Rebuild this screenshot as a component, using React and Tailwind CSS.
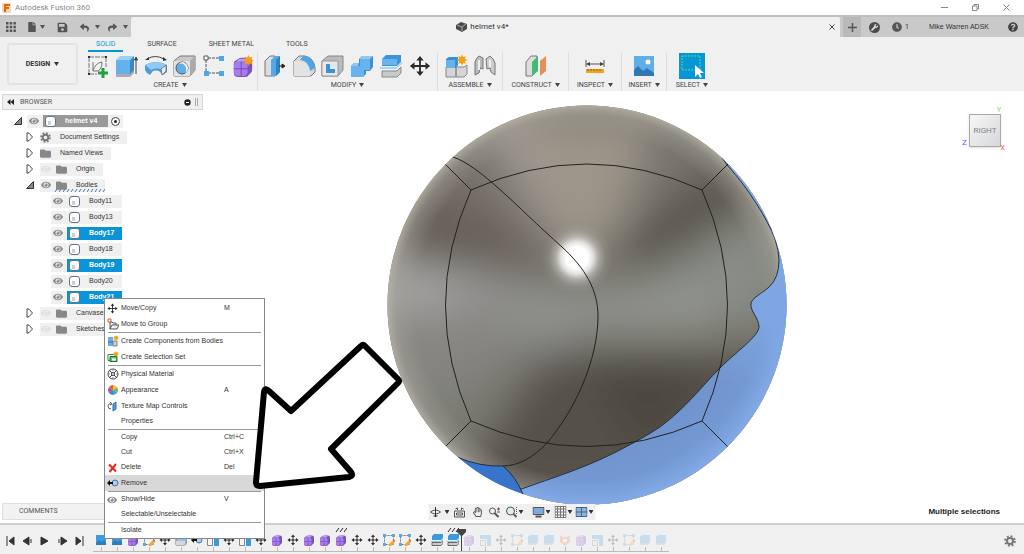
import React, { useState } from "react";
import {
  FaClock,
  FaEye,
  FaFile,
  FaFolder,
  FaQuestionCircle,
  FaRegHandPaper,
  FaReply,
  FaSave,
  FaShare,
  FaWrench,
} from "react-icons/fa";

/* ---------- small shared icons ---------- */

function Caret({ className = "" }) {
  return (
    <svg width="5" height="4" viewBox="0 0 5 4" className={className} aria-hidden>
      <path d="M0 0h5L2.5 4z" fill="currentColor" />
    </svg>
  );
}

function MoveIcon({ size = 12 }) {
  return (
    <svg width={size} height={size} viewBox="0 0 24 24" aria-hidden>
      <path d="M12 4v16M4 12h16" stroke="#2b2b2b" strokeWidth="2" />
      <path
        d="M12 1l4 5H8zM12 23l4-5H8zM1 12l5-4v8zM23 12l-5-4v8z"
        fill="#2b2b2b"
      />
    </svg>
  );
}

function FormIcon({ size = 12, star = false }) {
  return (
    <svg width={size} height={size} viewBox="0 0 24 24" aria-hidden>
      <path
        d="M2 9q0-2 2-3l3-2q1-1 3-1h8q4 0 4 4v9q0 2-1 3l-3 3q-1 2-4 2H7q-5 0-5-5z"
        fill="#7d50c2"
      />
      <path d="M2 10q1-3 4-3h7q4 0 4 4v8q-1 4-4 4H7q-4 0-5-4z" fill="#a77be8" />
      <path d="M4 7l4-3h10l-4 3z" fill="#bd9bf0" />
      <path d="M10 7v16M2 15h15M17 15l5-3" stroke="#7447b8" strokeWidth="1" fill="none" />
      {star && <Star cx={18} cy={6} />}
    </svg>
  );
}

function Star({ cx, cy, s = 1 }) {
  return (
    <path
      transform={`translate(${cx} ${cy}) scale(${s})`}
      d="M0-6l1.3 2.8L4.2-4.2 3.2-1.3 6 0 3.2 1.3 4.2 4.2 1.3 3.2 0 6-1.3 3.2-4.2 4.2-3.2 1.3-6 0-3.2-1.3-4.2-4.2-1.3-3.2z"
      fill="#f5a014"
    />
  );
}

/* ---------- ribbon icons ---------- */

const box = { width: 26, height: 26, viewBox: "0 0 26 26", "aria-hidden": true };

const SketchIcon = () => (
  <svg {...box}>
    <path d="M4 4h17M4 4v17M21 4v10M4 21h8" stroke="#777" strokeDasharray="5 1" fill="none" />
    <path d="M8 18V9M8 18h5Q17 16 17 9Q10 10 8 18" stroke="#777" fill="none" />
    <path d="M3 3h2v2H3zM20 3h2v2h-2zM3 20h2v2H3z" fill="#333" />
    <path d="M18 15v10M13 20h10" stroke="#23a045" strokeWidth="3" />
  </svg>
);
const ExtrudeIcon = () => (
  <svg {...box}>
    <path d="M2 20h14v4H2zM16 24l4-4v-4l-4 4z" fill="#a9adb1" />
    <path d="M2 7h14v14H2z" fill="#65b1ea" />
    <path d="M2 7l4-4h14l-4 4z" fill="#9bd0f5" />
    <path d="M16 7l4-4v14l-4 4z" fill="#3788c8" />
    <path d="M22 6v15M20.500 7L22 4l1.500 3z" stroke="#444" fill="#333" />
  </svg>
);
const RevolveIcon = () => (
  <svg {...box}>
    <path d="M4 6Q12 1 21 6" stroke="#444" fill="none" />
    <path d="M2 7l4-3v3zM20 4l4 3-4 1z" fill="#333" />
    <path d="M2 12q11-6 22 0v7l-4 3-4-4q-3-1-6 0l-3 4q-4-2-5-5z" fill="#4f9bd8" />
    <path d="M2 12q11-6 22 0l-6 4q-5-2-10 1z" fill="#90caf2" />
    <path d="M18 16l5-4v6l-4 4z" fill="#eee" stroke="#777" />
  </svg>
);
const HoleIcon = () => (
  <svg {...box}>
    <path d="M2 8l6-5h15v14l-5 6H2z" fill="#c8c8c8" stroke="#777" />
    <path d="M2 8h16v15H2z" fill="#e2e2e2" />
    <path d="M18 8l5-5v14l-5 6z" fill="#aaa" />
    <circle cx="10" cy="15" r="6" fill="#62aee8" stroke="#555" />
    <path d="M7 11q5-2 7 4 1 3-1 5 3-1 3-5t-5-6q-3 0-4 2z" fill="#f3f3f3" />
  </svg>
);
const PatternIcon = () => (
  <svg {...box}>
    <path d="M7 5h11M5 7v11M7 20h11" stroke="#555" strokeDasharray="3 1" />
    <path d="M3 3h4v4H3z" fill="#fff" stroke="#555" />
    <path d="M18 3h5v5h-5zM3 18h5v5H3zM18 18h5v5h-5z" fill="#4ea7e6" />
  </svg>
);
const PressPullIcon = () => (
  <svg {...box}>
    <path d="M3 8l5-5h5v20H3z" fill="#ddd" stroke="#777" />
    <path d="M9 7l4-4h5v16l-4 4H9z" fill="#57a8e6" />
    <path d="M14 7l4-4v16l-4 4z" fill="#2f83c4" />
    <path d="M17 13h5M20 11l3 2-3 2z" stroke="#222" fill="#222" />
  </svg>
);
const FilletIcon = () => (
  <svg {...box}>
    <path d="M3 23V8l5-5h6q9 2 10 12v4l-4 4z" fill="#d9d9d9" stroke="#777" />
    <path d="M12 3h2q9 2 10 12l-5 3Q18 8 9 7z" fill="#4fa4e4" />
    <path d="M3 8h6q9 2 10 12v3H3z" fill="#e3e3e3" />
  </svg>
);
const ShellIcon = () => (
  <svg {...box}>
    <path d="M2 8l6-5h15v14l-5 6H2z" fill="#bbb" stroke="#888" />
    <path d="M2 8h16v15H2z" fill="#e8e8e8" stroke="#999" />
    <path d="M6 11h9v9H6z" fill="#3b91d3" />
    <path d="M10 11h5v5h-5z" fill="#d9ecf9" />
  </svg>
);
const CombineIcon = () => (
  <svg {...box}>
    <path d="M2 13l3-3h5V6l3-3h11v11l-3 4h-4v3l-3 3H2z" fill="#3b8fd4" />
    <path d="M2 13h9V6h10v11h-6v7H2z" fill="#68b3ec" />
    <path d="M2 13l3-3h5l-1 3zM10 6l3-3h11l-3 3z" fill="#8cc8f3" />
  </svg>
);
const SplitIcon = () => (
  <svg {...box}>
    <path d="M4 6l4-4h15v7l-4 4H4z" fill="#3f94d6" />
    <path d="M4 6h15v6H4z" fill="#69b4ec" />
    <path d="M2 14h16l6-5v2l-6 5H2z" fill="#a4d6f8" />
    <path d="M4 18h15l4-4v6l-4 4H4z" fill="#c9c9c9" stroke="#888" />
  </svg>
);
const NewComponentIcon = () => (
  <svg {...box}>
    <path d="M3 14h10v10H3zM13 14h8l3-2v9l-3 3h-8z" fill="#d5d5d5" stroke="#888" />
    <path d="M3 6l3-2h9v8l-2 3H3z" fill="#3990d6" />
    <path d="M3 7h9v8H3z" fill="#67b2eb" />
    <Star cx={19} cy={7} s={0.9} />
  </svg>
);
const JointIcon = () => (
  <svg {...box}>
    <path d="M3 9q1-4 4-6l4 2v11l-3-1-1 5-4 2z" fill="#bbb" stroke="#777" />
    <path d="M14 6l4-3q4 3 5 7v12l-4-3-1-4-3 1z" fill="#ccc" stroke="#777" />
    <path d="M7 7v10M18 7v7" stroke="#eee" strokeWidth="2" />
  </svg>
);
const ConstructIcon = () => (
  <svg {...box}>
    <path d="M3 9l5-6h6v15l-5 5H3z" fill="#ddd" stroke="#777" />
    <path d="M9 9l6-6v15l-6 5z" fill="#41bc74" />
    <path d="M17 8l6-5v15l-6 5z" fill="#e88d58" />
  </svg>
);
const MeasureIcon = () => (
  <svg {...box}>
    <path d="M4 7v7M22 7v7M5 11h16" stroke="#555" />
    <path d="M4 11l4-2v4zM22 11l-4-2v4z" fill="#444" />
    <path d="M4 16h18v4H4z" fill="#eda51d" />
    <path d="M6 16v2M9 16v2M12 16v2M15 16v2M18 16v2" stroke="#8b600d" />
  </svg>
);
const InsertIcon = () => (
  <svg {...box}>
    <path d="M3 3h20v20H3z" fill="#5eaee9" />
    <path d="M3 17l4-4 5 5 4-3 7 5v3H3z" fill="#2f78b4" />
    <circle cx="17" cy="9" r="2.500" fill="#fff6c9" />
  </svg>
);
const SelectIcon = () => (
  <svg {...box}>
    <path d="M0 0h26v26H0z" fill="#0696d7" />
    <path d="M3 3h18v14H3z" fill="none" stroke="#5bdc79" strokeDasharray="2 1" />
    <path d="M16 12v12l3-3 2 4 2-1-2-4h4z" fill="#fff" />
  </svg>
);

const toolGroups = [
  {
    name: "CREATE",
    width: "w-[175px]",
    tools: [
      ["Create Sketch", <SketchIcon />],
      ["Extrude", <ExtrudeIcon />],
      ["Revolve", <RevolveIcon />],
      ["Hole", <HoleIcon />],
      ["Pattern", <PatternIcon />],
      ["Create Form", <FormIcon size={22} star />],
    ],
  },
  {
    name: "MODIFY",
    width: "w-[180px]",
    tools: [
      ["Press Pull", <PressPullIcon />],
      ["Fillet", <FilletIcon />],
      ["Shell", <ShellIcon />],
      ["Combine", <CombineIcon />],
      ["Split Body", <SplitIcon />],
      ["Move", <MoveIcon size={22} />],
    ],
  },
  {
    name: "ASSEMBLE",
    width: "w-[65px]",
    tools: [
      ["New Component", <NewComponentIcon />],
      ["Joint", <JointIcon />],
    ],
  },
  { name: "CONSTRUCT", width: "w-[66px]", tools: [["Offset Plane", <ConstructIcon />]] },
  { name: "INSPECT", width: "w-[53px]", tools: [["Measure", <MeasureIcon />]] },
  { name: "INSERT", width: "w-[45px]", tools: [["Insert Image", <InsertIcon />]] },
  { name: "SELECT", width: "w-[50px]", tools: [["Select", <SelectIcon />]] },
];

function TitleBar() {
  return (
    <header className="flex h-[15px] items-center justify-between bg-white">
      <div className="flex items-center gap-1 pl-[2px]">
        <svg width="9" height="10" viewBox="0 0 9 10" aria-hidden>
          <path d="M0 0h9v10H0z" fill="#f9d5b5" />
          <path d="M2 1h6v2H4v1h3v2H4v3H2z" fill="#d86c0d" />
        </svg>
        <span className="text-[8px] leading-[15px] text-[#888]">Autodesk Fusion 360</span>
      </div>
      <div className="flex items-center gap-6 pr-[14px] text-[#888]">
        <button aria-label="Minimize">
          <svg width="7" height="7" viewBox="0 0 7 7"><path d="M0 3.500h7" stroke="currentColor" /></svg>
        </button>
        <button aria-label="Restore">
          <svg width="7" height="7" viewBox="0 0 7 7" fill="none" stroke="currentColor">
            <path d="M.5 2h4.500v4.500H.5zM2 2V.5h4.500V5H5" />
          </svg>
        </button>
        <button aria-label="Close window">
          <svg width="7" height="7" viewBox="0 0 7 7"><path d="M.5.5l6 6M6.500.5l-6 6" stroke="currentColor" /></svg>
        </button>
      </div>
    </header>
  );
}

function DocumentBar() {
  return (
    <div className="flex h-[22px] border-t-2 border-[#bfbfbf] bg-[#c9c9c9] text-[#555]">
      <div className="flex w-[131px] items-center pl-[6px]">
        <button aria-label="Data panel">
          <svg width="10" height="10" viewBox="0 0 10 10" fill="#555">
            <path d="M0 0h2.500v2.500H0zM3.700 0h2.500v2.500H3.700zM7.400 0h2.500v2.500H7.400zM0 3.700h2.500v2.500H0zM3.700 3.700h2.500v2.500H3.700zM7.400 3.700h2.500v2.500H7.400zM0 7.400h2.500v2.500H0zM3.700 7.400h2.500v2.500H3.700zM7.400 7.400h2.500v2.500H7.400z" />
          </svg>
        </button>
        <button aria-label="File" className="ml-[11px] flex items-center gap-[3px]"><FaFile size={10} /><Caret /></button>
        <button aria-label="Save" className="ml-3"><FaSave size={11} /></button>
        <button aria-label="Undo" className="ml-3 flex items-center gap-[6px]"><FaReply size={9} /><Caret /></button>
        <button aria-label="Redo" className="ml-2 flex items-center gap-[6px]"><FaShare size={9} /><Caret /></button>
      </div>
      <div className="flex flex-1 items-center rounded-t-[2px] bg-[#f0f0f0] px-[5px]">
        <div className="flex flex-1 items-center justify-center gap-[3px] text-[8px] text-[#333]">
          <svg width="11" height="10" viewBox="0 0 11 10" aria-hidden>
            <path d="M0 3l5-3 6 2v5L6 10 0 7z" fill="#4c4c4c" />
            <path d="M1 3l5 2 4-3M6 5v4" stroke="#aaa" fill="none" />
          </svg>
          helmet v4*
        </div>
        <button aria-label="Close tab">
          <svg width="6" height="6" viewBox="0 0 6 6"><path d="M.5.5l5 5M5.500.5l-5 5" stroke="#444" /></svg>
        </button>
      </div>
      <div className="flex w-[184px] items-center pl-[3px]">
        <button aria-label="New tab" className="flex h-full w-[18px] items-center justify-center bg-[#b9b9b9]">
          <svg width="9" height="9" viewBox="0 0 9 9"><path d="M4.500 0v9M0 4.500h9" stroke="#555" strokeWidth="1.500" /></svg>
        </button>
        <button aria-label="Extensions" className="ml-2 flex h-[11px] w-[11px] items-center justify-center rounded-full bg-[#4c4c4c] text-[#ddd]">
          <FaWrench size={7} />
        </button>
        <button className="ml-3 flex items-center gap-[3px] text-[7px] text-[#333]"><FaClock size={10} color="#555" />1</button>
        <button className="ml-5 whitespace-nowrap font-['Liberation_Sans',sans-serif] text-[7px] text-[#333]">Mike Warren ADSK</button>
        <button aria-label="Help" className="ml-auto mr-[6px]"><FaQuestionCircle size={10} color="#444" /></button>
      </div>
    </div>
  );
}

function Ribbon() {
  const [tab, setTab] = useState("SOLID");
  return (
    <div className="flex h-[54px] bg-[#f0f0f0] text-[7px] text-[#444]">
      <button className="mt-[6px] ml-[7px] flex h-[42px] w-[71px] items-center justify-center gap-1 rounded-[3px] border-2 border-[#e3e3e3] font-bold text-[#333]">
        DESIGN <Caret />
      </button>
      <div className="ml-[5px]">
        <nav className="flex h-[15px] gap-4 pl-[5px]">
          {["SOLID", "SURFACE", "SHEET METAL", "TOOLS"].map((t) => (
            <button
              key={t}
              onClick={() => setTab(t)}
              className={`h-[15px] border-b-2 px-2 pt-[2px] leading-[11px] ${
                t === tab ? "border-[#0696d7] text-[#0696d7]" : "border-transparent"
              }`}
            >
              {t}
            </button>
          ))}
        </nav>
        <div className="flex">
          {toolGroups.map((g) => (
            <div key={g.name} className={`${g.width} flex flex-col items-center border-r border-[#dedede] last:border-r-0`}>
              <div className="flex h-[27px] items-center">
                {g.tools.map(([name, icon]) => (
                  <button key={name} aria-label={name} className="flex w-[29px] justify-center">{icon}</button>
                ))}
              </div>
              <button className="flex h-3 items-center gap-[3px] leading-[12px]">{g.name} <Caret /></button>
            </div>
          ))}
        </div>
      </div>
    </div>
  );
}

/* ---------- browser tree ---------- */

function Eye({ off }) {
  return <FaEye size={10} className={off ? "text-[#dedede]" : "text-[#8a8a8a]"} />;
}

function Twisty({ open }) {
  return (
    <svg width="8" height="10" viewBox="0 0 8 10" aria-hidden>
      {open ? (
        <path d="M7.500 1.500v7h-7z" fill="#888" stroke="#333" />
      ) : (
        <path d="M1 .8v8.400l2-.6 3.500-3.600L3 1.200z" fill="#fff" stroke="#444" />
      )}
    </svg>
  );
}

function BodyIcon() {
  return (
    <svg width="11" height="11" viewBox="0 0 11 11" aria-hidden>
      <rect x=".5" y=".5" width="10" height="10" rx="2.500" fill="#fff" stroke="#68727c" />
      <path d="M3 5h3v4H3z" fill="#c9d2dc" />
    </svg>
  );
}

function Gear({ size = 11 }) {
  return (
    <svg width={size} height={size} viewBox="0 0 12 12" aria-hidden>
      <circle cx="6" cy="6" r="4.800" fill="none" stroke="#777" strokeWidth="2" strokeDasharray="1.900 1.870" />
      <circle cx="6" cy="6" r="3" fill="none" stroke="#777" strokeWidth="2" />
    </svg>
  );
}

const folders = [
  { name: "Document Settings", icon: "gear" },
  { name: "Named Views" },
  { name: "Origin", eye: true, off: true },
  { name: "Bodies", eye: true, open: true },
];
const bodies = ["Body11", "Body13", "Body17", "Body18", "Body19", "Body20", "Body21"];
const lastFolders = [
  { name: "Canvases", eye: true, off: true },
  { name: "Sketches", eye: true, off: true },
];

function FolderRow({ item }) {
  return (
    <li className="flex h-4 items-center pl-[24px]">
      <button aria-label={`Expand ${item.name}`}><Twisty open={item.open} /></button>
      <div className="relative ml-[6px] flex h-[13px] items-center bg-[#f0f0f0] pr-2">
        {item.eye && <span className="flex w-4 justify-start pl-[1px]"><Eye off={item.off} /></span>}
        <span className="w-5">{item.icon ? <Gear /> : <FaFolder size={11} color="#888" />}</span>
        {item.name}
        {item.open && (
          <svg width="52" height="3" viewBox="0 0 52 3" className="absolute bottom-0 left-[14px]" aria-hidden>
            <path d="M1 3l2-3M5 3l2-3M9 3l2-3M13 3l2-3M17 3l2-3M21 3l2-3M25 3l2-3M29 3l2-3M33 3l2-3M37 3l2-3M41 3l2-3M45 3l2-3M49 3l2-3" stroke="#4f7ba3" />
          </svg>
        )}
      </div>
    </li>
  );
}

function Browser() {
  const [selected, setSelected] = useState(["Body17", "Body19", "Body21"]);

  const toggle = (name) =>
    setSelected((s) => (s.includes(name) ? s.filter((n) => n !== name) : [...s, name]));

  return (
    <aside className="flex w-[203px] flex-col pt-[3px] pl-[2px] font-['Liberation_Sans',sans-serif] text-[7px] text-[#333]">
      <div className="flex h-4 items-center border border-[#d5d5d5] bg-[#f0f0f0] px-1 font-[Roboto,sans-serif] text-[#555]">
        <svg width="7" height="6" viewBox="0 0 7 6" aria-hidden><path d="M3.500 0v6L0 3zM7 0v6L3.500 3z" fill="#222" /></svg>
        <span className="ml-[6px]">BROWSER</span>
        <button aria-label="Display settings" className="ml-auto mr-1">
          <svg width="7" height="7" viewBox="0 0 7 7"><circle cx="3.500" cy="3.500" r="3.200" fill="#222" /><path d="M2 3.500h3" stroke="#fff" /></svg>
        </button>
        <span className="h-2 w-[3px] border-x border-[#aaa]" />
      </div>
      <ul className="pt-[3px]">
        <li className="flex h-4 items-center pl-3">
          <button aria-label="Collapse helmet v4"><Twisty open /></button>
          <div className="ml-[5px] flex h-[13px] items-center bg-[#f0f0f0] pl-[2px]">
            <Eye />
            <button className="ml-1 flex h-[12px] w-[65px] items-center gap-[9px] bg-[#999] pl-[2px] font-bold text-white">
              <BodyIcon />helmet v4
            </button>
            <svg width="15" height="9" viewBox="0 0 15 9" aria-hidden>
              <circle cx="7.500" cy="4.500" r="4" fill="#fff" stroke="#444" /><circle cx="7.500" cy="4.500" r="1.500" fill="#222" />
            </svg>
          </div>
        </li>
        {folders.map((f) => <FolderRow key={f.name} item={f} />)}
        {bodies.map((b) => (
          <li key={b} className="flex h-4 items-center pl-[49px]">
            <span className="flex h-[13px] w-4 items-center bg-[#f0f0f0] pl-[2px]"><Eye /></span>
            <button
              onClick={() => toggle(b)}
              className={`flex h-[13px] w-[55px] items-center gap-[9px] pl-[2px] ${
                selected.includes(b) ? "bg-[#0a94d8] font-bold text-white" : "bg-[#f0f0f0]"
              }`}
            >
              <BodyIcon />{b}
            </button>
          </li>
        ))}
        {lastFolders.map((f) => <FolderRow key={f.name} item={f} />)}
      </ul>
      <button className="mt-auto mb-[3px] h-[17px] border border-[#e0e0e0] bg-[#f2f2f2] pl-4 text-left font-[Roboto,sans-serif] text-[#555]">
        COMMENTS
      </button>
    </aside>
  );
}

/* ---------- model ---------- */

function Helmet() {
  return (
    <svg width="400" height="400" viewBox="387 105 400 400" role="img" aria-label="helmet model">
      <defs>
        <clipPath id="ball"><circle cx="587" cy="305" r="199.500" /></clipPath>
        <filter id="soft" x="-60%" y="-60%" width="220%" height="220%"><feGaussianBlur stdDeviation="20" /></filter>
        <radialGradient id="rim" gradientUnits="userSpaceOnUse" cx="587" cy="305" r="200">
          <stop offset=".86" stopColor="#a6a49a" stopOpacity="0" />
          <stop offset=".95" stopColor="#a6a49a" stopOpacity=".4" />
          <stop offset="1" stopColor="#b9b6aa" stopOpacity=".8" />
        </radialGradient>
        <radialGradient id="shine" gradientUnits="userSpaceOnUse" cx="577" cy="258" r="36">
          <stop offset="0" stopColor="#fff" />
          <stop offset=".3" stopColor="#fff" />
          <stop offset=".45" stopColor="#fbfafa" stopOpacity=".8" />
          <stop offset=".6" stopColor="#eae8e6" stopOpacity=".42" />
          <stop offset=".8" stopColor="#d0cecb" stopOpacity=".12" />
          <stop offset="1" stopColor="#c8c6c4" stopOpacity="0" />
        </radialGradient>
        <radialGradient id="blue" gradientUnits="userSpaceOnUse" cx="587" cy="305" r="200">
          <stop offset=".6" stopColor="#6e92ca" />
          <stop offset=".88" stopColor="#7398d2" />
          <stop offset="1" stopColor="#83aae7" />
        </radialGradient>
        <linearGradient id="blueTop" x1="0" y1="0" x2="0" y2="1">
          <stop offset=".3" stopColor="#7fa6e2" />
          <stop offset=".65" stopColor="#7fa6e2" stopOpacity="0" />
        </linearGradient>
      </defs>
      <g clipPath="url(#ball)">
        <path d="M387 105h400v400H387z" fill="#76736c" />
        <g filter="url(#soft)">
          <path d="M350 70h480v50q-240-50-460 50z" fill="#827c70" />
          <path d="M490 120h165l-35 110-45 30-40-45z" fill="#9c9689" />
          <path d="M555 235L480 130l45-20z" fill="#a19b94" />
          <path d="M555 270L440 180l-60 60v30z" fill="#655f56" />
          <path d="M570 250L450 165l-20 30z" fill="#777067" />
          <path d="M590 300L350 245v95z" fill="#a3a2a0" />
          <path d="M560 290H450v60h120z" fill="#8f8e8c" />
          <path d="M560 320L350 310v130l90 10z" fill="#868581" />
          <path d="M530 350L380 420l50 60z" fill="#7b7c75" />
          <path d="M605 250L725 165l30 40-100 60z" fill="#59534d" />
          <path d="M610 300l170-100v125z" fill="#888d85" />
          <path d="M520 290h200v40H520z" fill="#92958f" />
          <path d="M545 355h240l-90 150H450z" fill="#54514a" />
          <path d="M590 365h125l-70 95z" fill="#4b463f" />
        </g>
        <circle cx="587" cy="305" r="200" fill="url(#rim)" />
        <circle cx="577" cy="258" r="36" fill="url(#shine)" />
        <path
          d="M722 158L728 166C748 188 768 220 775 239Q779 251 779 260Q779 278 769 287C763 293 751 298 751 304C750 311 759 318 759 327C758 337 737 351 720 368C700 388 687 407 660 427Q645 437 633 443C590 467 560 475 520 489L500 500V505H787V158z"
          fill="url(#blue)"
        />
        <path d="M779 258Q779 278 769 287C763 293 751 298 751 304C750 311 759 318 759 327C758 337 737 351 720 368V450H787V258z" fill="url(#blueTop)" />
        <path d="M722 158L728 166C748 188 768 220 775 239Q779 251 779 260Q779 278 769 287C763 293 751 298 751 304C750 311 759 318 759 327C758 337 737 351 720 368C700 388 687 407 660 427Q645 437 633 443C590 467 560 475 513 492" fill="none" stroke="#27303c" />
        <path d="M457 457Q480 467 503 466Q516 477 523 494V505H440z" fill="#3775cc" stroke="#222f42" />
        <g fill="none" stroke="#24221f" strokeWidth="1">
          <path d="M471 190Q587 138 702 190Q753 305 702 421Q587 472 471 421Q420 305 471 190" />
          <path d="M471 190l-26-26M702 190l26-26M471 421l-26 26M702 421l26 26" />
          <path d="M453 157C480 166 515 205 562 247C585 268 598 290 598 316C598 360 575 410 547 443C533 458 517 466 503 466" />
        </g>
      </g>
    </svg>
  );
}

function ViewCube() {
  return (
    <div className="absolute top-[23px] right-[23px] h-[33px] w-[32px]">
      <button className="h-full w-full border border-[#aaa] bg-linear-to-br from-[#f7f7f7] to-[#d5d7da] text-[8px] text-[#7d858d] shadow">
        RIGHT
      </button>
      <span className="absolute -top-[8px] right-0 text-[7px] leading-[8px] text-[#5ee65e]">Y</span>
      <span className="absolute bottom-0 -left-[7px] text-[8px] leading-[8px] text-[#5a5aff]">Z</span>
      <span className="absolute -right-[4px] -bottom-[5px] text-[7px] leading-[8px] text-[#ff4d4d]">X</span>
    </div>
  );
}

function NavBar() {
  const line = { width: 12, height: 12, viewBox: "0 0 12 12", fill: "none", stroke: "#555" };
  return (
    <div className="absolute bottom-[3px] left-1/2 flex h-4 w-[167px] -translate-x-1/2 items-center bg-[#f0f0f0] pl-[1px] text-[#333]">
      <button aria-label="Orbit" className="flex items-center gap-[3px]">
        <svg {...line}><path d="M1 6q5-4 10 0-5 4-10 0" /><path d="M6 1v10M4 10h4" stroke="#333" /></svg><Caret />
      </button>
      <button aria-label="Look at" className="ml-1">
        <svg {...line}><path d="M1 5h10v6H1zM3 7h6v2H3zM2 3l2-1v2M10 3L8 2v2" /></svg>
      </button>
      <button aria-label="Pan" className="ml-[7px]"><FaRegHandPaper size={10} color="#555" /></button>
      <button aria-label="Zoom" className="ml-[6px]">
        <svg {...line}><circle cx="4" cy="5" r="3" /><path d="M6 7l4 4" strokeWidth="2" /><path d="M8.500 3h3M10 1.500v3M8.500 6h3" /></svg>
      </button>
      <button aria-label="Fit" className="ml-[5px] flex items-center gap-[1px]">
        <svg {...line}><circle cx="5" cy="5" r="4" fill="#dceee6" /><path d="M8 8l3 3" strokeWidth="2" /><path d="M11 1v7" strokeDasharray="1 1" /></svg><Caret />
      </button>
      <button aria-label="Display" className="ml-[9px] flex items-center gap-[1px]">
        <svg {...line}><path d="M.5 1.500h11v7H.5z" fill="#80a9da" /><path d="M3 10.500h6" strokeWidth="2" /></svg><Caret />
      </button>
      <button aria-label="Grid" className="ml-1 flex items-center gap-[1px]">
        <svg {...line}><path d="M.5.5h11v11H.5zM3 .5v11M6 .5v11M9 .5v11M.5 3h11M.5 6h11M.5 9h11" stroke="#777" /></svg><Caret />
      </button>
      <button aria-label="Viewports" className="ml-[3px] flex items-center gap-[1px]">
        <svg {...line}><path d="M.5 1.500h11v9H.5zM6 1v10M0 6h12" fill="#8eb4e2" stroke="#44628a" /></svg><Caret />
      </button>
    </div>
  );
}

/* ---------- context menu ---------- */

const s12 = { width: 12, height: 12, viewBox: "0 0 12 12", fill: "none", "aria-hidden": true };

const GroupIcon = () => (
  <svg {...s12}>
    <path d="M3 11V4h2l1 1h3v2M3 11h7l2-4H5z" fill="#eee" stroke="#555" />
    <path d="M1 1h3v3H1z" fill="#fff" stroke="#d26038" />
  </svg>
);
const ComponentsIcon = () => (
  <svg {...s12}>
    <path d="M1 2h5v9H1z" fill="#68ace1" /><path d="M6 6h4v5H6z" fill="#ccc" stroke="#888" />
    <path d="M1 7h5" stroke="#3478b0" /><Star cx={9} cy={3} s={0.5} />
  </svg>
);
const SelectionSetIcon = () => (
  <svg {...s12}>
    <path d="M1 3.500h8v6H1z" fill="#fff" stroke="#2c8c38" /><path d="M3 5.500h7v5H3z" fill="#69bd72" stroke="#226e2c" />
    <path d="M5 7.500h4v2H5z" fill="#fff" /><Star cx={9} cy={3} s={0.5} />
  </svg>
);
const MaterialIcon = () => (
  <svg {...s12}>
    <circle cx="6" cy="6" r="5" stroke="#444" /><circle cx="6" cy="6" r="1.500" stroke="#444" />
    <path d="M2 2l3 3M10 2L7 5M2 10l3-3M10 10L7 7" stroke="#444" />
    <path d="M1 6h2M9 6h2M6 1v2M6 9v2" stroke="#888" />
  </svg>
);
const AppearanceIcon = () => (
  <svg {...s12}>
    <path d="M6 6V1a5 5 0 0 1 4.300 2.500z" fill="#f6c125" /><path d="M6 6l4.300-2.500a5 5 0 0 1 0 5z" fill="#62bd49" />
    <path d="M6 6l4.300 2.500A5 5 0 0 1 6 11z" fill="#31b0b5" /><path d="M6 6v5a5 5 0 0 1-4.300-2.500z" fill="#4978dd" />
    <path d="M6 6L1.700 8.500a5 5 0 0 1 0-5z" fill="#a24ac3" /><path d="M6 6L1.700 3.500A5 5 0 0 1 6 1z" fill="#ef5a36" />
  </svg>
);
const TextureIcon = () => (
  <svg {...s12}><path d="M5 4Q1 3 1 6t3 3M3 2l2 2-2 1" stroke="#666" /><path d="M6 4l3-2v7l-3 2z" fill="#4d9fe0" stroke="#2e6fa5" /></svg>
);
const DeleteIcon = () => (
  <svg {...s12}><path d="M2 2.500l7 7M9 2L2.500 10" stroke="#e5261f" strokeWidth="2" /></svg>
);
const RemoveIcon = () => (
  <svg {...s12}><circle cx="8" cy="6" r="3" fill="#a9ccef" stroke="#4674ab" /><path d="M6 6H2" stroke="#111" strokeWidth="2" /><path d="M3 3L0 6l3 3z" fill="#111" /></svg>
);

const menu = [
  [
    { label: "Move/Copy", keys: "M", icon: <MoveIcon size={11} />, tall: true },
    { label: "Move to Group", icon: <GroupIcon />, tall: true },
  ],
  [
    { label: "Create Components from Bodies", icon: <ComponentsIcon />, tall: true },
    { label: "Create Selection Set", icon: <SelectionSetIcon />, tall: true },
  ],
  [
    { label: "Physical Material", icon: <MaterialIcon />, tall: true },
    { label: "Appearance", keys: "A", icon: <AppearanceIcon />, tall: true },
    { label: "Texture Map Controls", icon: <TextureIcon />, tall: true },
    { label: "Properties" },
  ],
  [
    { label: "Copy", keys: "Ctrl+C" },
    { label: "Cut", keys: "Ctrl+X" },
    { label: "Delete", keys: "Del", icon: <DeleteIcon /> },
    { label: "Remove", icon: <RemoveIcon />, tall: true, active: true },
  ],
  [
    { label: "Show/Hide", keys: "V", icon: <FaEye size={10} color="#888" /> },
    { label: "Selectable/Unselectable" },
  ],
  [{ label: "Isolate" }],
];

function ContextMenu() {
  return (
    <div className="absolute top-[298px] left-[104px] z-10 w-[161px] border border-[#888] bg-white font-['Liberation_Sans',sans-serif] text-[7px] text-[#333]">
      {menu.map((section, i) => (
        <div key={i} className={i > 0 ? "bg-[linear-gradient(#999,#999)] bg-[length:153px_1px] bg-[position:3px_0] bg-no-repeat pt-px" : "pt-px"}>
          {section.map((item) => (
            <button
              key={item.label}
              className={`flex w-full items-center pl-[2px] text-left ${item.tall ? "h-4" : "h-[15px]"} ${
                item.active ? "bg-[#d8d8d8]" : "hover:bg-[#d8d8d8]"
              }`}
            >
              <span className="flex w-[14px] justify-start">{item.icon}</span>
              <span className="flex-1 whitespace-nowrap">{item.label}</span>
              {item.keys && <span className="w-[40px]">{item.keys}</span>}
            </button>
          ))}
        </div>
      ))}
    </div>
  );
}

/* ---------- timeline ---------- */

const features = {
  canvas: <svg {...s12}><path d="M1 1h10v10H1z" fill="#3e9cde" /><path d="M1 9l3-3 3 2 2-2 2 3v2H1z" fill="#2b7fbd" /></svg>,
  form: <FormIcon size={12} />,
  move: <MoveIcon size={12} />,
  sketch: (
    <svg {...s12}>
      <path d="M1.500 1.500h9v9h-9z" stroke="#777" strokeDasharray="2 1" />
      <path d="M0 0h3v3H0zM9 0h3v3H9zM0 9h3v3H0z" fill="#5aa8e2" />
      <path d="M6 10l4-4 2 2-4 4H6z" fill="#f4a72b" /><path d="M10 6l2 2 .5-2z" fill="#d64c35" />
    </svg>
  ),
  slab: <svg {...s12}><path d="M1 3l2-2h9v7l-2 3H1z" fill="#8ec3eb" stroke="#777" /><path d="M1 7h9v4H1z" fill="#d7d7d7" /></svg>,
  remove: <RemoveIcon />,
  mirror: <svg {...s12}><path d="M.5 3.500h5v8h-5z" fill="#f5f5f5" stroke="#888" /><path d="M7 2h5v10H7z" fill="#3d9bdc" /></svg>,
  split: (
    <svg {...s12}>
      <path d="M1 2l2-2h9v4l-2 2H1z" fill="#3c98da" /><path d="M0 7.500h9l3-3" stroke="#8ac8f4" />
      <path d="M1 8.500h9l2-2v3l-2 2H1z" fill="#ccc" stroke="#666" />
    </svg>
  ),
  scale: <svg {...s12}><path d="M1 1h11v11H8V5H1z" fill="#4aa3df" /><path d="M1.500 6.500h5v5h-5z" fill="#eee" stroke="#888" /></svg>,
  extrude: <svg {...s12}><path d="M1 3l2-2h8v7l-2 3H1z" fill="#55a8e3" /><path d="M1 9h8v2H1z" fill="#aaa" /></svg>,
  surface: <svg {...s12}><path d="M1 1l3 2h4l3-2v7l-5 4-5-4z" fill="#ee8a4f" /><path d="M4 5h4v3H4z" fill="#fff" /></svg>,
};

const done = [
  "canvas", "canvas", "form", "sketch", "move", "slab", "remove", "mirror", "move", "mirror", "move", "form",
  "move", "form", "form", "form", "move", "move", "sketch", "sketch", "move", "split", "split",
];
const rolledBack = [
  "form", "scale", "move", "sketch", "extrude", "extrude", "surface", "form", "scale", "move", "sketch", "extrude", "extrude",
];

function Timeline() {
  const controls = [
    ["First", "M2 1v10M4 6l5-4v8z"],
    ["Previous", "M1 6l6-4v8zM9 4v4"],
    ["Play", "M2 2l7 4-7 4z"],
    ["Next", "M11 6L5 2v8zM3 4v4"],
    ["Last", "M10 1v10M8 6L3 2v8z"],
  ];
  return (
    <footer className="flex h-[31px] items-start border-t-2 border-[#cfcfcf] bg-[#f0f0f0]">
      <div className="flex gap-[5px] pt-[10px] pl-[5px]">
        {controls.map(([name, d]) => (
          <button key={name} aria-label={name}>
            <svg width="12" height="12" viewBox="0 0 12 12"><path d={d} fill="#333" stroke="#333" /></svg>
          </button>
        ))}
      </div>
      <ol className="ml-2 flex">
        {[...done, ...rolledBack].map((f, i) => (
          <li key={i} className="relative flex h-[27px] w-4 flex-col items-center justify-end border-b border-[#bbb]">
            {(i === 15 || i === 22) && (
              <svg width="12" height="4" viewBox="0 0 12 4" className="absolute top-[3px]" aria-hidden>
                <path d="M1 4l3-4M5 4l3-4M9 4l3-4" stroke="#222" />
              </svg>
            )}
            <span className={i >= done.length ? "opacity-25" : ""}>{features[f]}</span>
            <span className="mt-px h-[4px] w-px bg-[#bbb]" />
            {i === done.length - 1 && (
              <svg width="9" height="22" viewBox="0 0 9 22" className="absolute right-[-5px] bottom-0" aria-hidden>
                <path d="M0 0h9v3L5 7v15H4V7L0 3z" fill="#444" />
              </svg>
            )}
          </li>
        ))}
      </ol>
      <button aria-label="Timeline settings" className="mt-[10px] mr-2 ml-auto"><Gear size={12} /></button>
    </footer>
  );
}

export default function App() {
  return (
    <div className="relative flex h-screen flex-col overflow-hidden bg-white font-[Roboto,sans-serif]">
      <TitleBar />
      <DocumentBar />
      <Ribbon />
      <main className="relative flex min-h-0 flex-1">
        <Browser />
        <section className="flex flex-1 items-start justify-center pt-[14px] pr-[53px]">
          <Helmet />
        </section>
        <ViewCube />
        <NavBar />
        <p className="absolute right-6 bottom-[5px] font-['Liberation_Sans',sans-serif] text-[8px] font-bold text-[#222]">
          Multiple selections
        </p>
      </main>
      <Timeline />
      <ContextMenu />
      {/* callout arrow pointing at Remove */}
      <svg width="156" height="154" viewBox="250 338 156 154" className="absolute top-[338px] left-[250px] z-20" aria-hidden>
        <path
          d="M361 346Q363 344 365 346L398 379Q400 381 398 383L331 449L351 472Q354 476 349 477L260 486Q256 486 256 482L264 392Q265 387 269 391L291 411Z"
          fill="#fff"
          stroke="#000"
          strokeWidth="6"
          strokeLinejoin="round"
        />
      </svg>
    </div>
  );
}
